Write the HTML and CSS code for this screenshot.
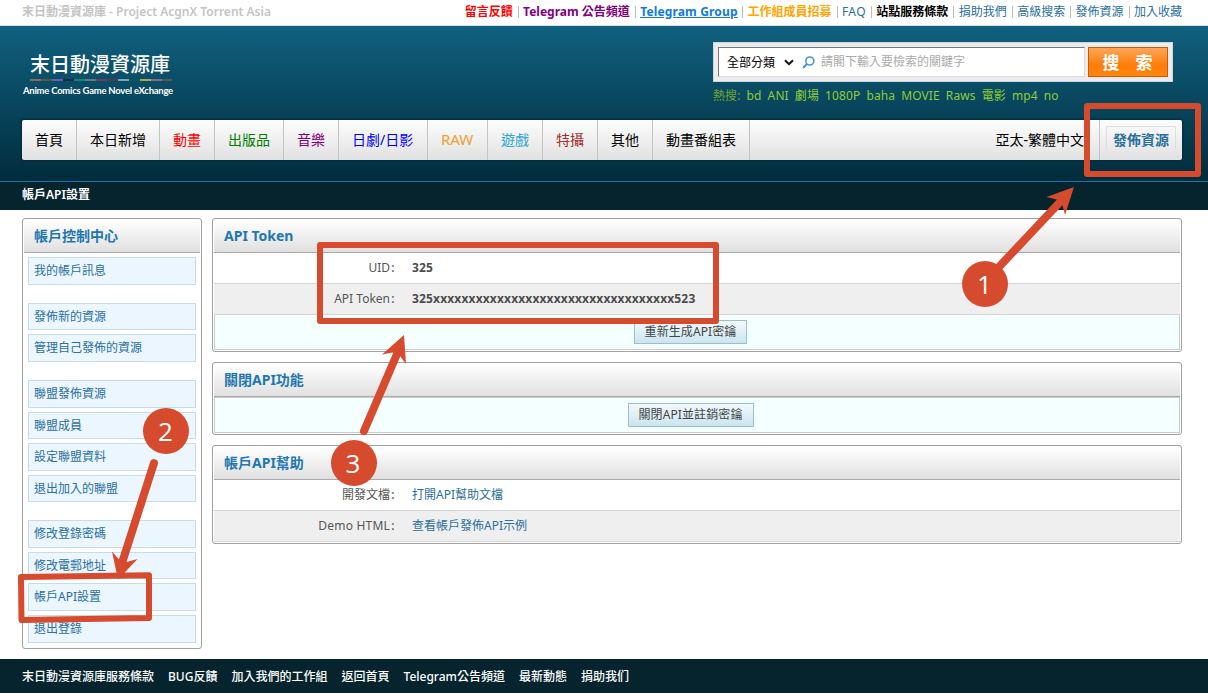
FILE: index.html
```
<!DOCTYPE html>
<html lang="zh-Hant">
<head>
    <meta charset="UTF-8">
    <meta name="viewport" content="width=device-width, initial-scale=1.0">
    <title>帳戶API設置 - 末日動漫資源庫</title>
    <link rel="stylesheet" href="styles.css">
</head>
<body>

    <div class="topbar">
        <div class="site-name">末日動漫資源庫 - Project AcgnX Torrent Asia</div>
        <div class="top-links">
            <a class="red" href="#">留言反饋</a><i></i>
            <a class="purple" href="#">Telegram 公告頻道</a><i></i>
            <a class="group" href="#">Telegram Group</a><i></i>
            <a class="orange" href="#">工作組成員招募</a><i></i>
            <a class="faq" href="#">FAQ</a><i></i>
            <a class="black" href="#">站點服務條款</a><i></i>
            <a href="#">捐助我們</a><i></i>
            <a href="#">高級搜索</a><i></i>
            <a href="#">發佈資源</a><i></i>
            <a href="#">加入收藏</a>
        </div>
    </div>

    <header class="header">
        <div class="header-top">
            <div class="logo">
                <div class="logo-title">末日動漫資源庫</div>
                <div class="logo-line"></div>
                <div class="logo-sub">Anime Comics Game Novel eXchange</div>
            </div>
            <div class="search">
                <form class="search-box">
                    <div class="search-field">
                        <span class="category">全部分類</span>
                        <svg class="chevron" width="10" height="7" viewBox="0 0 10 7"><path d="M1 1.2l4 4 4-4" fill="none" stroke="#111" stroke-width="2"/></svg>
                        <svg class="magnifier" width="13" height="13" viewBox="0 0 13 13"><circle cx="7.8" cy="5" r="4" fill="none" stroke="#4a94dc" stroke-width="1.6"/><path d="M4.9 8L1 12" stroke="#4a94dc" stroke-width="2"/></svg>
                        <input type="text" placeholder="請閣下輸入要檢索的關鍵字">
                    </div>
                    <button type="button" class="search-btn">搜<span></span>索</button>
                </form>
                <div class="hot">
                    <span>熱搜:</span>
                    <a>bd</a><a>ANI</a><a>劇場</a><a>1080P</a><a>baha</a><a>MOVIE</a><a>Raws</a><a>電影</a><a>mp4</a><a>no</a>
                </div>
            </div>
        </div>

        <nav class="nav">
            <a href="#">首頁</a>
            <a href="#">本日新增</a>
            <a href="#" class="red">動畫</a>
            <a href="#" class="green">出版品</a>
            <a href="#" class="purple">音樂</a>
            <a href="#" class="blue">日劇/日影</a>
            <a href="#" class="raw">RAW</a>
            <a href="#" class="game">遊戲</a>
            <a href="#" class="brown">特攝</a>
            <a href="#">其他</a>
            <a href="#">動畫番組表</a>
            <div class="lang">亞太-繁體中文</div>
            <div class="publish"><a href="#">發佈資源</a></div>
        </nav>
    </header>

    <div class="crumb">帳戶API設置</div>

    <div class="content">
        <aside class="panel sidebar">
            <h2>帳戶控制中心</h2>
            <ul>
                <li>我的帳戶訊息</li>
            </ul>
            <ul>
                <li>發佈新的資源</li>
                <li>管理自己發佈的資源</li>
            </ul>
            <ul>
                <li>聯盟發佈資源</li>
                <li>聯盟成員</li>
                <li>設定聯盟資料</li>
                <li>退出加入的聯盟</li>
            </ul>
            <ul>
                <li>修改登錄密碼</li>
                <li>修改電郵地址</li>
                <li>帳戶API設置</li>
                <li>退出登錄</li>
            </ul>
        </aside>

        <main class="main">
            <section class="panel">
                <h2>API Token</h2>
                <div class="row"><span class="label">UID<b>:</b></span><strong>325</strong></div>
                <div class="row grey"><span class="label">API Token<b>:</b></span><strong class="token">325xxxxxxxxxxxxxxxxxxxxxxxxxxxxxxxxxx523</strong></div>
                <div class="action"><button type="button" class="btn">重新生成API密鑰</button></div>
            </section>

            <section class="panel">
                <h2>關閉API功能</h2>
                <div class="action close"><button type="button" class="btn">關閉API並註銷密鑰</button></div>
            </section>

            <section class="panel">
                <h2>帳戶API幫助</h2>
                <div class="row"><span class="label">開發文檔<b>:</b></span><a href="#">打開API幫助文檔</a></div>
                <div class="row grey"><span class="label demo">Demo HTML<b>:</b></span><a href="#">查看帳戶發佈API示例</a></div>
            </section>
        </main>
    </div>

    <footer class="footer">
        <a href="#">末日動漫資源庫服務條款</a>
        <a href="#">BUG反饋</a>
        <a href="#">加入我們的工作組</a>
        <a href="#">返回首頁</a>
        <a href="#">Telegram公告頻道</a>
        <a href="#">最新動態</a>
        <a href="#">捐助我们</a>
    </footer>

    <!-- Step marks over the page -->
    <svg class="marks" width="1208" height="693" viewBox="0 0 1208 693">
        <g class="frame">
            <rect x="1087" y="106" width="111" height="68"/>
            <path d="M21 577L149 575.3V618L21.5 620z"/>
            <rect x="320" y="245" width="396" height="76"/>
        </g>
        <g class="shaft">
            <path d="M997 269L1061 201"/>
            <path d="M154 463L122 563"/>
            <path d="M364 431L397 354"/>
        </g>
        <g class="solid">
            <path d="M1074 187L1046.500 197L1056.500 199.500L1062.500 205.500L1065 215z"/>
            <path d="M118 579.500L112 551.500L119.500 560L126.500 562L137.500 559z"/>
            <path d="M404 335L382 354.500L392.500 352.500L400 356L406 364z"/>
            <circle cx="985" cy="284" r="23"/>
            <circle cx="166" cy="431" r="23"/>
            <circle cx="354" cy="463" r="23"/>
        </g>
        <text x="984.500" y="294">1</text>
        <text x="165.500" y="441">2</text>
        <text x="353" y="473">3</text>
    </svg>

</body>
</html>
```

FILE: styles.css
```
/* General Styles */
* {
    box-sizing: border-box;
}

body {
    margin: 0;
    height: 693px;
    overflow: hidden;
    display: flex;
    flex-direction: column;
    position: relative;
    font-family: "Noto Sans", "Noto Sans CJK TC", sans-serif;
    font-size: 12px;
    line-height: 16px;
    color: #555;
    background: #fff;
}

a {
    color: #2a6f9e;
    text-decoration: none;
    white-space: nowrap;
}

/* Top bar */
.topbar {
    height: 26px;
    padding: 0 26px 2px 22px;
    display: flex;
    justify-content: space-between;
    align-items: center;
    border-bottom: 1px solid #d5dfe3;
}

.site-name {
    color: #c4c4c4;
    font-weight: 600;
}

.top-links {
    display: flex;
    align-items: center;
}

.top-links i {
    width: 1px;
    height: 12px;
    margin: 0 4.4px 0 5px;
    background: #bbb;
}

.top-links .red,
.top-links .purple,
.top-links .group,
.top-links .orange,
.top-links .black {
    font-weight: bold;
}

.top-links .group {
    width: 97px;
    letter-spacing: 0.15px;
    color: #0d7ae0;
    text-decoration: underline;
}

.top-links .faq {
    width: 24px;
    letter-spacing: 0.4px;
}

.top-links .orange {
    color: orange;
}

.top-links .black {
    color: #000;
}

.red {
    color: red;
}

.purple {
    color: purple;
}

/* Header */
.header {
    height: 156px;
    padding: 0 26px 0 22px;
    background: linear-gradient(#10607f, #012c3c);
    border-bottom: 1px solid #1f74a4;
}

.header-top {
    height: 94px;
    display: flex;
    justify-content: space-between;
}

.logo {
    padding: 27px 0 0 1px;
    color: #fff;
}

.logo-title {
    padding-left: 7px;
    font-size: 20px;
    font-weight: 500;
    line-height: 24px;
}

.logo-line {
    width: 142px;
    height: 2px;
    margin: 2px 0 0 7px;
    background: linear-gradient(90deg, #8d6a60 0 11px, #5d5940 11px 22px, #7159b5 22px 33px, #18264a 33px 44px, #16866d 44px 55px, #667b80 55px 66px, #733d62 66px 77px, #57384e 77px 88px, #77a7b9 88px 99px, #075b4b 99px 110px, #aaa64a 110px 121px, #8a6791 121px 132px, #5e5547 132px);
}

.logo-sub {
    margin-top: 2px;
    font-family: Lato, sans-serif;
    font-size: 9.5px;
    font-weight: bold;
    letter-spacing: -0.25px;
    white-space: nowrap;
}

/* Search */
.search {
    width: 469px;
    padding-top: 16px;
}

.search-box {
    width: 460px;
    height: 40px;
    padding: 4px;
    display: flex;
    gap: 3px;
    background: #ececf0;
    border: 1px solid #ccd6db;
}

.search-field {
    width: 367px;
    height: 30px;
    padding-left: 8px;
    display: flex;
    align-items: center;
    background: #fff;
    border: 1px solid #ddd;
    border-top-color: #777;
    border-left-color: #777;
}

.category {
    padding-top: 1px;
    color: #000;
}

.chevron {
    margin: 0 8px 0 9px;
}

.search-field input {
    flex: 1;
    min-width: 0;
    padding: 0 0 0 6px;
    border: none;
    outline: none;
    font: inherit;
}

.search-field input::placeholder {
    color: #aaa;
}

.search-btn {
    width: 80px;
    height: 30px;
    padding: 0 1px 2px 0;
    display: flex;
    justify-content: center;
    align-items: center;
    font: bold 17px "Noto Sans", "Noto Sans CJK TC", sans-serif;
    color: #fff;
    background: linear-gradient(#ffa75a, #ff7d08 60%, #ff850f);
    border: 1px solid #c65d00;
}

.search-btn span {
    width: 16px;
}

.hot {
    margin-top: 6px;
    display: flex;
    gap: 6px;
    letter-spacing: 0.12px;
    color: #6fa52d;
}

.hot a {
    color: #8fcc35;
}

/* Navigation */
.nav {
    height: 40px;
    display: flex;
    font-size: 14px;
    line-height: 39px;
    background: linear-gradient(#fdfdfd, #e1e1e1);
    border-radius: 2px;
    box-shadow: 0 0 2px 1px #062a37;
}

.nav > a {
    padding: 0 13px;
    color: #000;
    border-right: 1px solid #c4c4c4;
}

.nav .red {
    color: red;
}

.nav .green {
    color: green;
}

.nav .purple {
    color: purple;
}

.nav .blue {
    width: 89px;
    color: blue;
}

.nav .raw {
    width: 60px;
    font-size: 15px;
    line-height: 38px;
    color: #f0a030;
}

.nav .game {
    color: #28a4d6;
}

.nav .brown {
    color: #a52a2a;
}

.lang {
    margin-left: auto;
    padding-right: 15px;
    color: #000;
}

.publish {
    width: 83px;
    padding: 6px;
    border-left: 1px solid #c4c4c4;
}

.publish a {
    display: block;
    height: 24px;
    line-height: 26px;
    text-align: center;
    font-weight: bold;
    border: 1px solid #ddd;
    border-bottom: none;
    border-radius: 2px;
}

.crumb {
    height: 28px;
    padding-left: 22px;
    line-height: 26px;
    font-weight: 600;
    color: #fff;
    background: #05242e;
}

/* Content */
.content {
    height: 449px;
    padding: 8px 26px 0 22px;
    display: flex;
    align-items: flex-start;
    gap: 10px;
}

.panel {
    padding: 1px;
    background: #fff;
    border: 1px solid #a0a0a0;
    border-radius: 3px;
}

.panel h2 {
    height: 33px;
    margin: 0;
    padding-left: 10px;
    font-size: 14px;
    line-height: 32px;
    color: #1e77b0;
    background: linear-gradient(#fff, #e0e0e0);
    border-bottom: 1px solid #aaa;
}

/* Sidebar */
.sidebar {
    width: 180px;
    height: 431px;
}

.sidebar ul {
    margin: 4px 4px 18.2px;
    padding: 0;
    list-style: none;
    display: flex;
    flex-direction: column;
    gap: 4px;
}

.sidebar li {
    height: 27.55px;
    padding-left: 5px;
    line-height: 25px;
    color: #2a6f9e;
    background: #ebf6ff;
    border: 1px solid #c6dce6;
}

.main {
    flex: 1;
    display: flex;
    flex-direction: column;
    gap: 10px;
}

.row {
    height: 30px;
    display: flex;
    align-items: center;
    gap: 16px;
}

.row.grey {
    height: 32px;
    background: #efefef;
    border-top: 1px solid #d5d5d5;
    border-bottom: 1px solid #d5d5d5;
}

.row strong {
    color: #4c4c4c;
    letter-spacing: 0.16px;
}

.label {
    width: 182px;
    display: flex;
    justify-content: flex-end;
}

.label.demo {
    letter-spacing: 0.2px;
}

.label b {
    width: 6px;
    text-align: center;
    font-weight: 500;
}

.action {
    height: 35px;
    padding-right: 13px;
    display: flex;
    justify-content: center;
    align-items: center;
    background: #f4ffff;
    border: 1px solid #ccc;
    border-top: none;
}

.action.close {
    height: 36px;
    border-top: 1px solid #ccc;
}

.btn {
    height: 24px;
    padding: 0 10px;
    font: inherit;
    letter-spacing: 0.1px;
    color: #444;
    background: linear-gradient(#f3f9fc, #cae5ef);
    border: 1px solid #9dbfcd;
}

/* Footer */
.footer {
    height: 34px;
    padding-left: 22px;
    display: flex;
    gap: 14px;
    line-height: 35px;
    background: #05242e;
}

.footer a {
    color: #fff;
    font-weight: 500;
}

/* Step marks */
.marks {
    position: absolute;
    top: 0;
    left: 0;
}

.frame {
    fill: none;
    stroke: #d64a2e;
    stroke-width: 6;
    stroke-linejoin: round;
}

.shaft {
    stroke: #d64a2e;
    stroke-width: 8;
    stroke-linecap: round;
}

.solid {
    fill: #d64a2e;
}

.marks text {
    fill: #fff;
    font-family: "Open Sans", sans-serif;
    font-size: 26px;
    text-anchor: middle;
}
```
